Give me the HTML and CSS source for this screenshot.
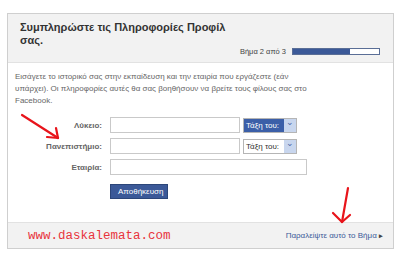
FILE: index.html
```html
<!DOCTYPE html>
<html lang="el">
<head>
    <meta charset="UTF-8">
    <title>Πληροφορίες Προφίλ</title>
    <link rel="stylesheet" href="styles.css">
</head>
<body>

<div class="card">
    <div class="head">
        <h2>Συμπληρώστε τις Πληροφορίες Προφίλ σας.</h2>
        <div class="step">
            <span>Βήμα 2 από 3</span>
            <div class="bar"><div class="fill" style="width: 66%"></div></div>
        </div>
    </div>
    <div class="body">
        <p class="intro">Εισάγετε το ιστορικό σας στην εκπαίδευση και την εταιρία που εργάζεστε (εάν υπάρχει). Οι πληροφορίες αυτές θα σας βοηθήσουν να βρείτε τους φίλους σας στο Facebook.</p>
        <div class="row">
            <label>Λύκειο:</label>
            <div class="input"></div>
            <div class="select active"><span>Τάξη του:</span><i>&#8964;</i></div>
        </div>
        <div class="row">
            <label>Πανεπιστήμιο:</label>
            <div class="input"></div>
            <div class="select"><span>Τάξη του:</span><i>&#8964;</i></div>
        </div>
        <div class="row">
            <label>Εταιρία:</label>
            <div class="input wide"></div>
        </div>
        <div class="row">
            <label></label>
            <button>Αποθήκευση</button>
        </div>
    </div>
    <div class="foot">
        <span class="site">www.daskalemata.com</span>
        <a>Παραλείψτε αυτό το Βήμα <b>&#9656;</b></a>
    </div>
</div>

<svg class="marks" width="400" height="256" viewBox="0 0 400 256">
    <g stroke="#e8141b" stroke-width="2.2" fill="none" stroke-linecap="round">
        <path d="M22 115 L58 138"/>
        <path d="M58 138 L56 128"/>
        <path d="M58 138 L47 137"/>
        <path d="M348 188 L342 222"/>
        <path d="M342 222 L333 213"/>
        <path d="M342 222 L350 215"/>
    </g>
</svg>

</body>
</html>
```
FILE: styles.css
```css
body { margin: 0; padding: 13px 6px 0 7px; background: #fff; font-family: "Liberation Sans", sans-serif; color: #555; }
.card { border: 1px solid #cfcfcf; height: 234px; display: flex; flex-direction: column; }
.head { background: #f2f2f2; border-bottom: 1px solid #e2e2e2; height: 49px; padding: 7px 12px 0 12px; box-sizing: border-box; }
.head h2 { margin: 0; font-size: 11px; line-height: 13px; color: #333; width: 225px; }
.step { display: flex; justify-content: flex-end; align-items: center; gap: 6px; font-size: 7.5px; color: #444; margin-top: 0; padding-right: 1px; }
.step span { flex: none; }
.bar { flex: none; width: 86px; height: 5px; border: 1px solid #5a6e96; background: #fff; }
.fill { height: 5px; background: #3b5998; }
.body { flex: 1; padding: 8px 7px 0 7px; }
.intro { margin: 0 0 10px 0; font-size: 8px; line-height: 12px; color: #666; width: 300px; }
.row { display: flex; align-items: center; gap: 3px; margin-bottom: 5px; }
.row label { width: 87px; text-align: right; font-size: 8px; font-weight: bold; color: #666; margin-right: 5px; }
.input { width: 128px; height: 14px; border: 1px solid #c9c9c9; background: #fff; }
.input.wide { width: 195px; }
.select { display: flex; align-items: center; height: 13px; border: 1px solid #b5b5b5; font-size: 8px; color: #333; background: #fff; }
.select span { padding: 0 5px 0 2px; line-height: 13px; }
.select.active span { background: #3b5fa8; color: #fff; }
.select i { width: 12px; height: 13px; background: #c8d6ee; color: #4a67a8; font-style: normal; font-size: 9px; line-height: 6px; text-align: center; }
button { margin-top: 4px; background: #3b5998; color: #fff; border: 1px solid #2c4679; font-family: "Liberation Sans", sans-serif; font-size: 8px; padding: 3px 7px; width: 58px; height: 15px; line-height: 7px; }
.foot { height: 25px; background: #f2f2f2; border-top: 1px solid #e2e2e2; display: flex; justify-content: space-between; align-items: center; padding: 0 10px 0 20px; }
.site { font-family: "Liberation Mono", monospace; font-size: 12.5px; color: #e8343c; }
.foot a { font-size: 8px; color: #3b5998; }
.foot a b { font-size: 7px; color: #444; }
.marks { position: absolute; left: 0; top: 0; pointer-events: none; }
```
